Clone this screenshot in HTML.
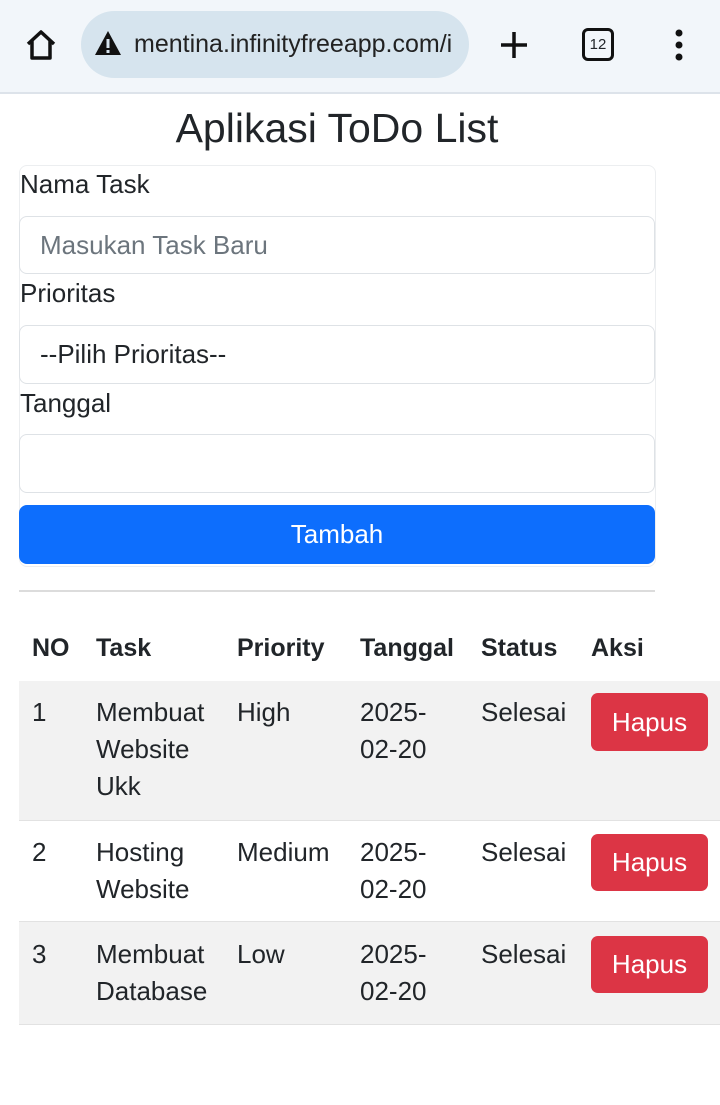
<!DOCTYPE html><html><head><style>
body{margin:0;width:720px;height:1105px;background:#fff;font-family:"Liberation Sans",sans-serif;color:#212529;position:relative;overflow:hidden}
.a{position:absolute;white-space:nowrap}
.inp{position:absolute;left:19px;width:634px;border:1px solid #dee2e6;border-radius:8px;background:#fff}
.t{font-size:26px;line-height:37px}
.b{font-size:25px;line-height:37px;font-weight:bold}
.h{position:absolute;left:591px;width:117px;background:#dc3545;color:#fff;border-radius:7px;font-size:26px;text-align:center}
</style></head><body>
<div class="a" style="left:0;top:0;width:720px;height:92px;background:#f2f6fa;border-bottom:2px solid #dde3ea"></div>
<svg class="a" style="left:24px;top:28px" width="34" height="34" viewBox="0 0 34 34"><path d="M4 16L17 4L30 16M8 13V30H26V13" fill="none" stroke="#111" stroke-width="3.5" stroke-linejoin="round"/></svg>
<div class="a" style="left:81px;top:11px;width:388px;height:67px;border-radius:34px;background:#d6e4ee"></div>
<svg class="a" style="left:94px;top:30px" width="28" height="26" viewBox="0 0 28 26"><path d="M14 1L27 25H1Z" fill="#111"/><rect x="12.5" y="9" width="3" height="9" fill="#d6e4ee"/><rect x="12.5" y="20" width="3" height="3" fill="#d6e4ee"/></svg>
<div class="a" style="left:134px;top:30px;font-size:25px;color:#222;width:330px;overflow:hidden">mentina.infinityfreeapp.com/i</div>
<svg class="a" style="left:499px;top:30px" width="30" height="30"><path d="M15 2V28M2 15H28" stroke="#111" stroke-width="3.5"/></svg>
<div class="a" style="left:582px;top:28px;width:26px;height:27px;border:3.5px solid #111;border-radius:6px;font-size:15px;text-align:center;line-height:27px">12</div>
<svg class="a" style="left:672px;top:28px" width="14" height="34"><circle cx="7" cy="5" r="3.5" fill="#111"/><circle cx="7" cy="17" r="3.5" fill="#111"/><circle cx="7" cy="29" r="3.5" fill="#111"/></svg>

<div class="a" style="left:0;width:674px;top:103px;text-align:center;font-size:41px;line-height:50px">Aplikasi ToDo List</div>
<div class="a" style="left:19px;top:165px;width:635px;height:400px;border:1px solid #eceef0;border-radius:8px"></div>
<div class="a t" style="left:20px;top:166px">Nama Task</div>
<div class="inp" style="top:216px;height:56px"></div>
<div class="a t" style="left:40px;top:227px;color:#6c757d">Masukan Task Baru</div>
<div class="a t" style="left:20px;top:275px">Prioritas</div>
<div class="inp" style="top:325px;height:57px"></div>
<div class="a t" style="left:40px;top:336px">--Pilih Prioritas--</div>
<div class="a t" style="left:20px;top:385px">Tanggal</div>
<div class="inp" style="top:434px;height:57px"></div>
<div class="a" style="left:19px;top:505px;width:636px;height:59px;background:#0d6efd;border-radius:8px;color:#fff;font-size:26px;line-height:59px;text-align:center">Tambah</div>
<div class="a" style="left:19px;top:590px;width:636px;height:2px;background:#dcdcdc"></div>

<div class="a" style="left:19px;top:681px;width:701px;height:139px;background:#f2f2f2"></div>
<div class="a" style="left:19px;top:820px;width:701px;height:1px;background:#e2e2e2"></div>
<div class="a" style="left:19px;top:921px;width:701px;height:102px;background:#f2f2f2;border-top:1px solid #e2e2e2;border-bottom:1px solid #e2e2e2"></div>
<div class="a b" style="top:630px;left:32px">NO</div>
<div class="a b" style="top:630px;left:96px">Task</div>
<div class="a b" style="top:630px;left:237px">Priority</div>
<div class="a b" style="top:630px;left:360px">Tanggal</div>
<div class="a b" style="top:630px;left:481px">Status</div>
<div class="a b" style="top:630px;left:591px">Aksi</div>

<div class="a t" style="top:694px;left:32px">1</div>
<div class="a t" style="top:694px;left:96px">Membuat<br>Website<br>Ukk</div>
<div class="a t" style="top:694px;left:237px">High</div>
<div class="a t" style="top:694px;left:360px">2025-<br>02-20</div>
<div class="a t" style="top:694px;left:481px">Selesai</div>
<div class="h" style="top:693px;height:58px;line-height:58px">Hapus</div>

<div class="a t" style="top:834px;left:32px">2</div>
<div class="a t" style="top:834px;left:96px">Hosting<br>Website</div>
<div class="a t" style="top:834px;left:237px">Medium</div>
<div class="a t" style="top:834px;left:360px">2025-<br>02-20</div>
<div class="a t" style="top:834px;left:481px">Selesai</div>
<div class="h" style="top:834px;height:57px;line-height:57px">Hapus</div>

<div class="a t" style="top:936px;left:32px">3</div>
<div class="a t" style="top:936px;left:96px">Membuat<br>Database</div>
<div class="a t" style="top:936px;left:237px">Low</div>
<div class="a t" style="top:936px;left:360px">2025-<br>02-20</div>
<div class="a t" style="top:936px;left:481px">Selesai</div>
<div class="h" style="top:936px;height:57px;line-height:57px">Hapus</div>
</body></html>
